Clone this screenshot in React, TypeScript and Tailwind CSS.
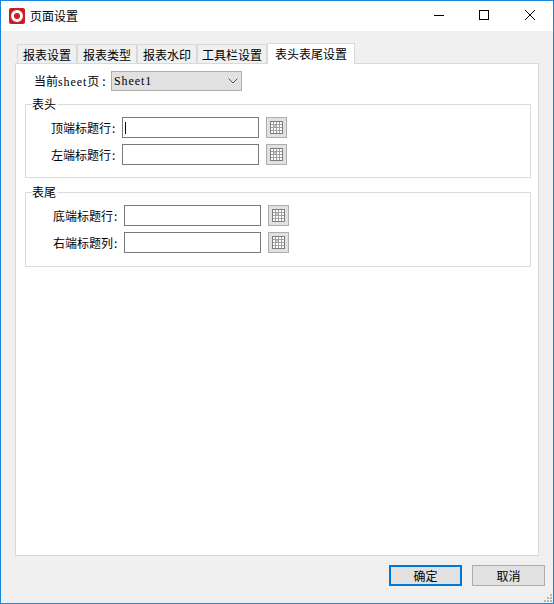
const cjk = "font-['Noto_Sans_CJK_SC',sans-serif]";
const latin = "font-['Liberation_Serif','Noto_Sans_CJK_SC',serif] tracking-[0.9px]";

const tabs = [
    { label: '报表设置', width: 'w-[60px]' },
    { label: '报表类型', width: 'w-[60px]' },
    { label: '报表水印', width: 'w-[60px]' },
    { label: '工具栏设置', width: 'w-[70px]' },
];

function GridIcon() {
    return (
        <svg width="13" height="13" viewBox="0 0 13 13" shapeRendering="crispEdges">
            <rect x="0.5" y="0.5" width="12" height="12" fill="#fff" stroke="#7d7d7d" />
            <rect x="4" y="4" width="3" height="3" fill="#b9c9de" />
            <path d="M3.5 1V12M6.5 1V12M9.5 1V12M1 3.5H12M1 6.5H12M1 9.5H12" stroke="#a0a0a0" fill="none" />
        </svg>
    );
}

function RangeRow({ label, cursor }: { label: string; cursor?: boolean }) {
    return (
        <div className="flex items-center h-[21px]">
            <span className="w-[71px] text-[12px] leading-[21px] text-black whitespace-nowrap">
                {label}<span className="ml-px">:</span>
            </span>
            <div className="w-[137px] h-[21px] bg-white border border-[#7a7a7a] flex items-center pl-[2px]">
                {cursor && <div className="w-px h-[12px] bg-black" />}
            </div>
            <button className="ml-[7px] w-[21px] h-[21px] bg-[#e1e1e1] border border-[#adadad] flex items-center justify-center">
                <GridIcon />
            </button>
        </div>
    );
}

function Group({ title, height, inset, children }: { title: string; height: string; inset: string; children: React.ReactNode }) {
    return (
        <div className={`relative ml-[9px] w-[506px] ${height} border border-[#dcdcdc]`}>
            <span className="absolute left-[6px] -top-[9px] bg-white pr-px text-[12px] leading-[16px] text-black">{title}</span>
            <div className={`pt-[12px] ${inset} flex flex-col gap-[6px]`}>{children}</div>
        </div>
    );
}

export default function App() {
    return (
        <div className={`relative w-[554px] h-[604px] flex flex-col bg-[#f0f0f0] border border-[#1a86d9] overflow-hidden ${cjk}`}>
            {/* Title bar */}
            <div className="h-[30px] shrink-0 bg-white flex items-center">
                <div className="ml-[8px] w-[16px] h-[16px] rounded-[2px] bg-[#cc1c24] flex items-center justify-center">
                    <div className="w-[12px] h-[12px] rounded-full border-[3px] border-white" />
                </div>
                <span className="ml-[5px] text-[12px] text-black">页面设置</span>
                <div className="ml-auto flex items-center h-full">
                    <svg width="46" height="30" viewBox="0 0 46 30" shapeRendering="crispEdges">
                        <path d="M19 14.5H29" stroke="#000" fill="none" />
                    </svg>
                    <svg width="46" height="30" viewBox="0 0 46 30" shapeRendering="crispEdges">
                        <rect x="18.5" y="9.5" width="9" height="9" stroke="#000" fill="none" />
                    </svg>
                    <svg width="46" height="30" viewBox="0 0 46 30">
                        <path d="M18 9L28 19M28 9L18 19" stroke="#000" fill="none" />
                    </svg>
                </div>
            </div>

            <div className="flex-1 min-h-0 flex flex-col pl-[14px] pr-[14px]">
                {/* Tabs */}
                <div className="h-[32px] shrink-0 flex items-end pl-[2px]">
                    {tabs.map(tab => (
                        <div key={tab.label} className={`${tab.width} h-[19px] pt-[1px] bg-[#f0f0f0] border border-b-0 border-[#d9d9d9] flex items-center justify-center text-[12px] leading-none text-black`}>
                            {tab.label}
                        </div>
                    ))}
                    <div className="relative z-10 w-[88px] h-[21px] -mb-px bg-white border border-b-0 border-[#d9d9d9] flex items-center justify-center text-[12px] leading-none text-black">
                        表头表尾设置
                    </div>
                </div>

                {/* Panel */}
                <div className="w-[524px] h-[493px] bg-white border border-[#d9d9d9] flex flex-col">
                    <div className="flex items-center h-[20px] mt-[7px] ml-[18px]">
                        <span className="w-[77px] text-[12px] text-black whitespace-nowrap">
                            当前<span className={latin}>sheet</span>页<span className="ml-[3px]">:</span>
                        </span>
                        <div className="w-[131px] h-[20px] bg-[#e1e1e1] border border-[#adadad] flex items-center pl-[2px] pr-[3px]">
                            <span className={`text-[12px] text-black ${latin}`}>Sheet1</span>
                            <svg className="ml-auto" width="10" height="6" viewBox="0 0 10 6">
                                <path d="M0.5 0.5L5 5L9.5 0.5" stroke="#555" fill="none" />
                            </svg>
                        </div>
                    </div>

                    <div className="mt-[13px]">
                        <Group title="表头" height="h-[74px]" inset="pl-[25px]">
                            <RangeRow label="顶端标题行" cursor />
                            <RangeRow label="左端标题行" />
                        </Group>
                    </div>

                    <div className="mt-[14px]">
                        <Group title="表尾" height="h-[75px]" inset="pl-[27px]">
                            <RangeRow label="底端标题行" />
                            <RangeRow label="右端标题列" />
                        </Group>
                    </div>
                </div>

                {/* Footer */}
                <div className="flex-1 flex items-start justify-end pt-[9px] -mr-[6px]">
                    <button className="w-[73px] h-[21px] bg-[#e1e1e1] border-2 border-[#0078d7] text-[12px] leading-none text-black">确定</button>
                    <button className="ml-[10px] w-[73px] h-[21px] bg-[#e1e1e1] border border-[#adadad] text-[12px] leading-none text-black">取消</button>
                </div>
            </div>

            {/* Resize grip */}
            <svg className="absolute right-0 bottom-0" width="9" height="9" viewBox="0 0 9 9" shapeRendering="crispEdges" fill="#b5b5b5">
                <rect x="6" y="0" width="2" height="2" />
                <rect x="3" y="3" width="2" height="2" />
                <rect x="6" y="3" width="2" height="2" />
                <rect x="0" y="6" width="2" height="2" />
                <rect x="3" y="6" width="2" height="2" />
                <rect x="6" y="6" width="2" height="2" />
            </svg>
        </div>
    );
}
